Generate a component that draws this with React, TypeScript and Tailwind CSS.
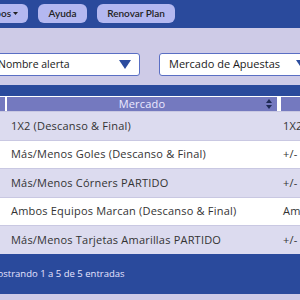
const rows = [
  { mercado: "1X2 (Descanso & Final)", tipo: "1X2" },
  { mercado: "Más/Menos Goles (Descanso & Final)", tipo: "+/- 2" },
  { mercado: "Más/Menos Córners PARTIDO", tipo: "+/- 9" },
  { mercado: "Ambos Equipos Marcan (Descanso & Final)", tipo: "Ambos" },
  { mercado: "Más/Menos Tarjetas Amarillas PARTIDO", tipo: "+/- 3" },
];

function Triangle() {
  return (
    <svg width="12" height="9" viewBox="0 0 12 9" className="shrink-0">
      <path d="M0 0 H12 L6 9 Z" fill="#2b4c9e" />
    </svg>
  );
}

function SortIcon() {
  return (
    <svg width="6" height="10" viewBox="0 0 6 10">
      <path d="M3 0 L6 4 H0 Z M3 10 L0 6 H6 Z" fill="#1e2a55" />
    </svg>
  );
}

export default function App() {
  return (
    <div
      className="w-[300px] h-[300px] overflow-hidden bg-[#cecbe7] text-[#222]"
      style={{ fontFamily: "'Open Sans', 'Noto Sans', sans-serif" }}
    >
      {/* nav */}
      <div
        className="h-[28px] bg-[#2a4a9c] flex items-start pt-[4px] gap-[10px] -ml-[40px]"
        style={{ fontFamily: "Lato, sans-serif" }}
      >
        <button className="h-[19px] w-[68px] shrink-0 rounded-[6px] bg-[#b4b8f0] text-[10px] font-semibold flex items-center justify-end pr-[10px] gap-[2px]">
          Grupos
          <svg width="5" height="3" viewBox="0 0 5 3"><path d="M0 0H5L2.5 3Z" fill="#222" /></svg>
        </button>
        <button className="h-[19px] w-[49px] shrink-0 rounded-[6px] bg-[#b4b8f0] text-[10px] font-semibold">
          Ayuda
        </button>
        <button className="h-[19px] w-[78px] shrink-0 rounded-[6px] bg-[#b4b8f0] text-[10px] font-semibold">
          Renovar Plan
        </button>
      </div>

      {/* filters */}
      <div className="h-[57px] flex items-start pt-[25px] gap-[19px] -ml-[30px]">
        <div className="h-[23px] w-[170px] shrink-0 bg-white border border-[#5a6fc4] rounded-[3px] flex items-center pl-[27px] pr-[8px] text-[10.5px] font-medium text-[#1a1a1a] whitespace-nowrap">
          Nombre alerta
          <div className="flex-1" />
          <Triangle />
        </div>
        <div className="h-[23px] w-[150px] shrink-0 bg-white border border-[#5a6fc4] rounded-[3px] flex items-center justify-between pl-[9px] text-[11px] font-medium text-[#1a1a1a] whitespace-nowrap">
          Mercado de Apuestas
          <Triangle />
        </div>
      </div>

      {/* table card */}
      <div className="bg-[#2a4a9c] pt-[11px]">
        <div className="flex h-[15px] bg-white gap-[2px] pt-[1px]">
          <div className="w-[5px] bg-[#7479bf]" />
          <div className="w-[270px] bg-[#7479bf] flex items-center justify-center relative text-[11px] text-[#eceaff] tracking-[0.2px]">
            Mercado
            <span className="absolute right-[5px] top-[2px]">
              <SortIcon />
            </span>
          </div>
          <div className="flex-1 ml-[2px] bg-[#7479bf]" />
        </div>
        {rows.map((r, i) => (
          <div
            key={i}
            className={`flex items-center h-[28.6px] text-[11px] tracking-[0.2px] text-[#333] border-t border-[#c9c8e2] ${
              i % 2 === 0 ? "bg-[#dcdbef]" : "bg-white"
            }`}
          >
            <div className="w-[281px] shrink-0 pl-[11px] whitespace-nowrap">{r.mercado}</div>
            <div className="pl-[2px] whitespace-nowrap">{r.tipo}</div>
          </div>
        ))}
        <div className="h-[40px] flex items-center -ml-[11px] text-[9.5px] text-[#e6e4ff] whitespace-nowrap">
          Mostrando 1 a 5 de 5 entradas
        </div>
      </div>
    </div>
  );
}
